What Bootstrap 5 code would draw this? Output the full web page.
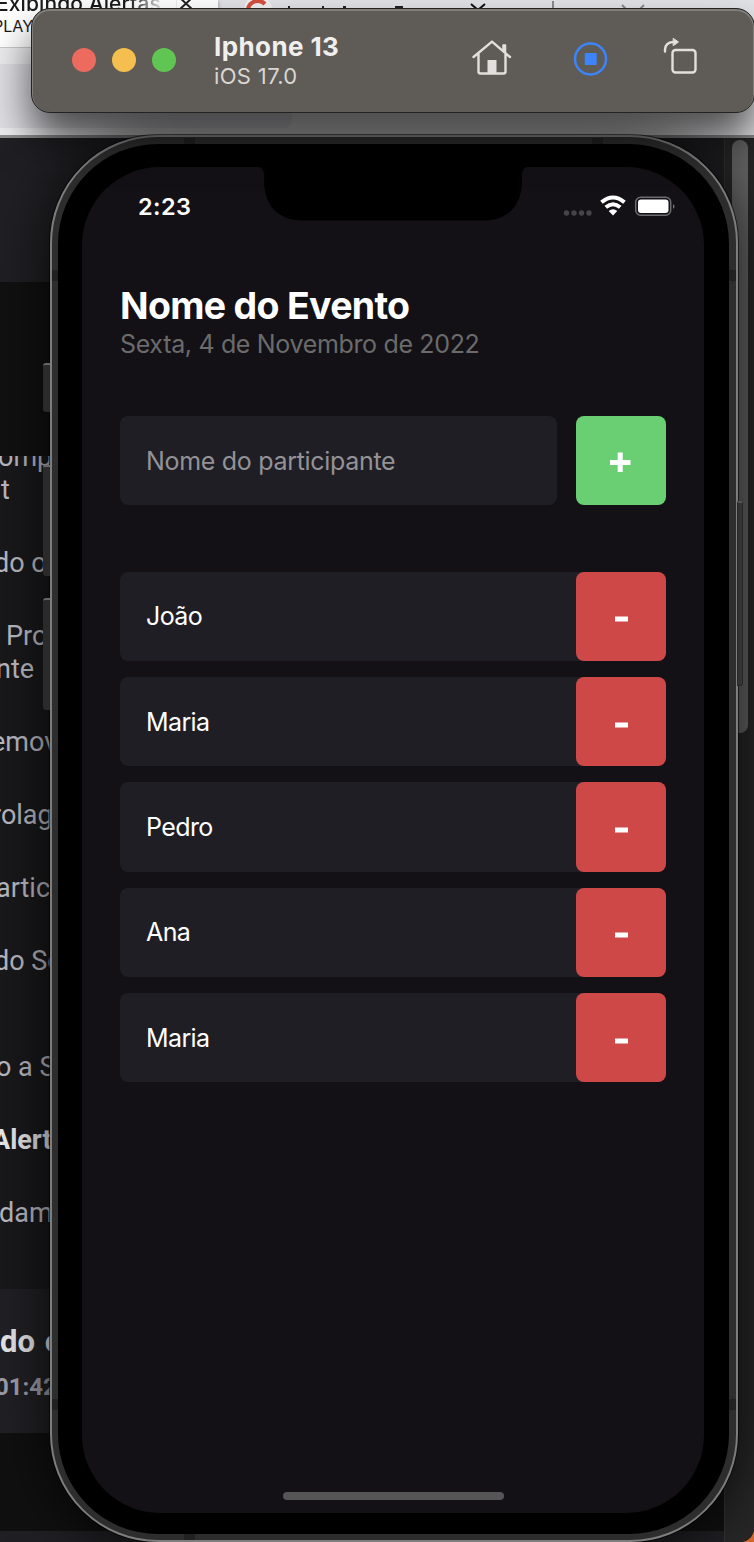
<!DOCTYPE html>
<html lang="pt-BR">
<head>
<meta charset="utf-8">
<meta name="viewport" content="width=device-width, initial-scale=1">
<title>Iphone 13</title>
<link href="https://cdn.jsdelivr.net/npm/bootstrap@5.3.0/dist/css/bootstrap.min.css" rel="stylesheet">
<style>
body{margin:0;width:754px;height:1542px;overflow:hidden;font-family:Inter,sans-serif;background:#d0662e}
.desk{width:754px;height:1542px;overflow:hidden;border-bottom-right-radius:14px;background:#101011}
/* browser behind */
.tabs{height:48px;background:#e2e3e7;color:#1a1a1a}
.tab-on{width:218px;background:#fff;border-bottom:1px solid #c9c9cb;box-shadow:1px 1px 3px #aaa}
.tab-title{font:500 21px/24px Inter,sans-serif;margin:-8px 0 0 -4px;width:170px;letter-spacing:.1px;white-space:nowrap;-webkit-mask:linear-gradient(90deg,#000 78%,transparent);mask:linear-gradient(90deg,#000 78%,transparent)}
.tab-sub{font:400 16px/20px Inter,sans-serif;margin:0 0 0 -7px}
.addr{height:90px;background:#ececef;border-bottom:3px solid #8d8d8d;padding-top:16px}
.pill{width:292px;height:64px;background:#dfdfe4;border-radius:0 8px 8px 0}
.page-body{height:1404px}
.side{width:724px;overflow:hidden;font-family:Roboto,sans-serif;color:#bcbcc4;font-size:27px;line-height:33px;white-space:nowrap}
.s1{height:144px;background:#202024}
.s2{height:174px;background:#111}
.s3{height:833px;background:#19191b;overflow:hidden}
.s4{height:144px;background:#212125;padding-top:35px}
.s5{height:98px;background:#101010}
.s6{height:20px;background:#202024}
.lesson{margin-bottom:40px}
.lesson.strong-row{color:#ececee;font-weight:700}
.track{width:30px;background:#272727;border-left:1px solid #333;padding:2px 6px 0 7px}
.thumb{height:593px;border-radius:8px;background:#656565}
/* phone */
.phone{left:50px;top:135px;width:688px;height:1407px;border-radius:108px;background:#2d2d2d;border:2px solid #7d7d7d;box-shadow:0 0 0 1px rgba(0,0,0,.55),0 4px 60px rgba(0,0,0,.8);padding:7px 7px 6px 6px}
.glass{height:100%;background:#000;border-radius:100px;padding:23px 25px 21px 24px}
.screen{height:100%;border-radius:78px;background:#131116;padding:0 38px;overflow:hidden;color:#fff}
.band{position:absolute;background:#212121}
.key{position:absolute;left:-9px;width:7px;background:#2a2a2a;border-top:2px solid #666;border-radius:3px 0 0 3px}
.key-r{position:absolute;left:685px;top:364px;width:6px;height:185px;background:#333;border:1px solid #272727;border-top:2px solid #555;border-radius:0 3px 3px 0}
.notch{left:206px;top:30px}
.clock{font-size:23.5px;font-weight:600;line-height:30px;padding-left:18px;letter-spacing:.4px}
.status{height:78px;padding-top:25px}
.status svg{margin-right:-9px;overflow:visible}
.ev-title{font-size:37.5px;font-weight:700;line-height:44px;margin:38.5px 0 0;letter-spacing:-.7px}
.ev-date{font-size:25px;line-height:32px;color:#6b6b6b;margin:0 0 56px;letter-spacing:-.34px}
.field{height:89.3px;background:#1f1e25;border-radius:8px;padding-left:26px;font-size:25px;letter-spacing:-.31px}
.field>span{letter-spacing:-.6px;padding-top:1.5px}
.sq{width:90px;height:89.3px;border-radius:8px;border:0;color:#fff;padding:0}
.add{background:#6acf73}.del{background:#cf4848}
.form-row{gap:19px;margin-bottom:67px}
.people{gap:16px}
.homebar{left:231px;bottom:40px;width:221px;height:8px;border-radius:4px;background:#555457}
/* simulator bar */
.simbar{left:31px;top:8px;width:724px;height:105px;border-radius:19px;background:#5f5b57;border:1px solid #242322;box-shadow:inset 0 1px 0 1px rgba(255,255,255,.22),0 26px 42px rgba(0,0,0,.66);padding:0 56px 2px 40px}
.simbar svg{overflow:visible}
.lamp{width:24px;height:24px;border-radius:50%}
.dev{font-size:26px;font-weight:700;line-height:30px;color:#f1efee;letter-spacing:.4px}
.os{font-size:22px;line-height:28px;color:#dad6d3;letter-spacing:.35px}
svg{display:block}
</style>
<script src="https://cdn.jsdelivr.net/npm/bootstrap@5.3.0/dist/js/bootstrap.bundle.min.js"></script>
</head>
<body>
<div class="desk position-relative">
  <div class="tabs d-flex overflow-hidden">
    <div class="tab-on d-flex justify-content-between">
      <div><div class="tab-title">Exibindo Alertas</div><div class="tab-sub">PLAY</div></div>
      <svg width="42" height="20"><path d="M0 0V8" stroke="#ddd"/><path d="M2 -4l16 15M18 -4l-16 15" stroke="#222" stroke-width="2"/></svg>
    </div>
    <svg width="536" height="10"><circle cx="40" cy="10" r="14" fill="#f2f2f3"/><path d="M30 9a10 10 0 0 1 17-5" fill="none" stroke="#d5503f" stroke-width="4"/><path d="M70 7h2M105 6v2M125 7h3M177 7h8" stroke="#222" stroke-width="2"/><path d="M253 4l14 12M267 4l-14 12" stroke="#111" stroke-width="2"/><path d="M335 1v8" stroke="#88888e" stroke-width="2"/><path d="M404 5l8 8M426 5l-8 8" stroke="#88888e" stroke-width="2"/></svg>
  </div>
  <div class="addr"><div class="pill"></div></div>
  <div class="page-body d-flex">
    <div class="side">
      <div class="s1"></div>
      <div class="s2"></div>
      <div class="s3">
        <div class="lesson" style="margin-top:-15px"><div style="margin-left:-2px">omp</div><div style="margin-left:1px">t</div></div>
        <div class="lesson" style="margin-left:-6px">do o</div>
        <div class="lesson"><div style="margin-left:6px">Pro</div><div style="margin-left:-4px">nte</div></div>
        <div class="lesson" style="margin-left:-9px">emov</div>
        <div class="lesson" style="margin-left:-8px">rolage</div>
        <div class="lesson" style="margin-left:-4px">artic</div>
        <div class="lesson" style="margin-left:-6px">do So</div>
        <div class="lesson" style="margin-left:-4px;padding-top:33px">o a S</div>
        <div class="lesson strong-row" style="margin-left:-8px">Alerta</div>
        <div class="lesson" style="margin-left:-1px">dame</div>
      </div>
      <div class="s4"><div class="fw-bold" style="font-size:31px;line-height:36px;color:#e9e9ec;word-spacing:2px">do e</div><div class="fw-bold" style="margin:12px 0 0 -5px;font-size:24px;line-height:30px;color:#a0a0ac">01:42</div></div>
      <div class="s5"></div>
      <div class="s6"></div>
    </div>
    <div class="track"><div class="thumb"></div></div>
  </div>

  <div class="phone position-absolute">
    <div class="key" style="top:226px;height:49px"></div>
    <div class="key" style="top:328px;height:111px"></div>
    <div class="key" style="top:461px;height:112px"></div>
    <div class="key-r"></div>
    <div class="glass">
      <div class="screen">
        <div class="status d-flex justify-content-between">
          <div class="clock">2:23</div>
          <svg width="112" height="30" viewBox="0 0 112 30"><g fill="#454448"><circle cx="3.500" cy="21" r="2.700"/><circle cx="11" cy="21" r="2.700"/><circle cx="18.500" cy="21" r="2.700"/><circle cx="26" cy="21" r="2.700"/></g><g transform="translate(-2.500 0)"><g fill="none" stroke="#fff" stroke-width="4"><path d="M41 10.300Q52.500 .8 64 10.300"/><path d="M45.300 15.300Q52.500 9.200 59.700 15.300"/></g><path d="M48.200 18.900Q52.500 15.400 56.800 18.900L52.500 23.500z" fill="#fff"/></g><g transform="translate(-2.500 0)"><rect x="75.200" y="5.300" width="35" height="18" rx="5" fill="none" stroke="#6c6b6f" stroke-width="1.500"/><rect x="77.500" y="7.600" width="30.500" height="13.400" rx="3" fill="#fff"/><path d="M112.500 12q3 2.500 0 5z" fill="#77767a"/></g></svg>
        </div>
        <h1 class="ev-title">Nome do Evento</h1>
        <p class="ev-date">Sexta, 4 de Novembro de 2022</p>
        <div class="form-row d-flex">
          <div class="field flex-grow-1 d-flex align-items-center" style="color:#939296"><div class="pt-1">Nome do participante</div></div>
          <button class="sq add btn d-flex align-items-center justify-content-center"><svg width="22" height="24"><path d="M0 14.500h20.500M10.200 4.500v20" stroke="#fff" stroke-width="5"/></svg></button>
        </div>
        <div class="people d-flex flex-column">
          <div class="field d-flex align-items-center justify-content-between"><span>João</span><button class="sq del btn"><svg class="mx-auto" width="13" height="12"><path d="M0 9h13" stroke="#fff" stroke-width="5"/></svg></button></div>
          <div class="field d-flex align-items-center justify-content-between"><span>Maria</span><button class="sq del btn"><svg class="mx-auto" width="13" height="12"><path d="M0 9h13" stroke="#fff" stroke-width="5"/></svg></button></div>
          <div class="field d-flex align-items-center justify-content-between"><span>Pedro</span><button class="sq del btn"><svg class="mx-auto" width="13" height="12"><path d="M0 9h13" stroke="#fff" stroke-width="5"/></svg></button></div>
          <div class="field d-flex align-items-center justify-content-between"><span>Ana</span><button class="sq del btn"><svg class="mx-auto" width="13" height="12"><path d="M0 9h13" stroke="#fff" stroke-width="5"/></svg></button></div>
          <div class="field d-flex align-items-center justify-content-between"><span>Maria</span><button class="sq del btn"><svg class="mx-auto" width="13" height="12"><path d="M0 9h13" stroke="#fff" stroke-width="5"/></svg></button></div>
        </div>
      </div>
    </div>
    <div class="band" style="left:132px;top:1px;width:11px;height:6px"></div>
    <div class="band" style="left:540px;top:1px;width:11px;height:6px"></div>
    <div class="band" style="left:132px;bottom:0;width:11px;height:6px"></div>
    <div class="band" style="left:0;top:133px;width:6px;height:11px"></div>
    <div class="band" style="right:0;top:133px;width:7px;height:11px"></div>
    <div class="band" style="left:0;top:1262px;width:6px;height:11px"></div>
    <div class="band" style="right:0;top:1262px;width:7px;height:11px"></div>
    <svg class="notch position-absolute" width="270" height="54"><path d="M0 0Q6 0 6 8V14C6 40 22 53.500 44 53.500H226C248 53.500 264 40 264 14V8Q264 0 270 0z"/></svg>
    <div class="homebar position-absolute"></div>
  </div>

  <div class="simbar position-absolute d-flex align-items-center">
    <div class="d-flex" style="gap:16px"><span class="lamp" style="background:#ed6a5e"></span><span class="lamp" style="background:#f5bf4f"></span><span class="lamp" style="background:#61c554"></span></div>
    <div style="margin-left:38px;padding-top:3px"><div class="dev">Iphone 13</div><div class="os">iOS 17.0</div></div>
    <div class="ms-auto d-flex">
      <svg width="40" height="40" viewBox="0 0 40 40" fill="none" stroke="#e3dfdc" stroke-width="2.400" stroke-linecap="round" stroke-linejoin="round"><path d="M1.500 17L20 1.600 38 17M6.500 14v17.500a2 2 0 0 0 2 2h23a2 2 0 0 0 2-2V14"/><path d="M31 5h2.500v7l-2.500-2.500z" fill="#e3dfdc" stroke-width="1.500"/><path d="M15.500 20h9v14h-9z" fill="#e3dfdc" stroke="none"/></svg>
      <svg width="34" height="40" viewBox="0 0 34 40" style="margin-left:62px"><circle cx="16.500" cy="19" r="15.500" fill="none" stroke="#3d85f7" stroke-width="2.500"/><rect x="10.700" y="13" width="12" height="12" rx="1" fill="#3d85f7"/></svg>
      <svg width="34" height="40" viewBox="0 0 34 40" style="margin-left:56px" fill="none" stroke="#e3dfdc" stroke-width="2.400" stroke-linecap="round"><rect x="8.500" y="10" width="23" height="22.500" rx="3"/><path d="M1 11.500V9.500Q1.500 2.500 9 2"/><path d="M9.500 -1.500L14.500 2 9.500 5.500z" fill="#e3dfdc" stroke-width="1"/></svg>
    </div>
  </div>
</div>
</body>
</html>
